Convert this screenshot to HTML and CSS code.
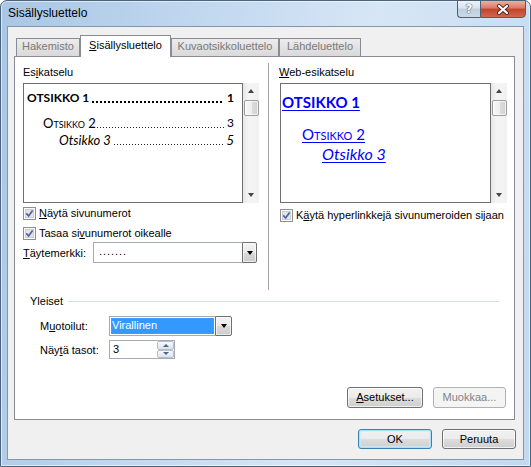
FILE: index.html
```html
<!DOCTYPE html>
<html lang="fi">
<head>
<meta charset="utf-8">
<title>Sisällysluettelo</title>
<link rel="stylesheet" href="styles.css">
</head>
<body>
<div class="window">
  <div class="titlebar">
    <div class="title">Sisällysluettelo</div>
    <div class="caption-btns">
      <div class="cap-btn help"><span>?</span></div>
      <div class="cap-btn close">
        <svg width="14" height="11" viewBox="0 0 14 11"><path d="M3 2 L11 9 M11 2 L3 9" stroke="#4b2a22" stroke-width="4" stroke-linecap="round"/><path d="M3 2 L11 9 M11 2 L3 9" stroke="#ffffff" stroke-width="2.2" stroke-linecap="round"/></svg>
      </div>
    </div>
  </div>
  <div class="client">
    <div class="tabs">
      <div class="tab tw1">Hakemisto</div>
      <div class="tab active tw2"><u>S</u>isällysluettelo</div>
      <div class="tab tw3">Kuvaotsikkoluettelo</div>
      <div class="tab tw4">Lähdeluettelo</div>
    </div>
    <div class="panel">
      <div class="columns">
        <div class="col col-left">
          <div class="label">Es<u>i</u>katselu</div>
          <div class="preview-wrap">
            <div class="preview print">
              <div class="toc l1"><span class="t">OTSIKKO 1</span><span class="dots"></span><span class="num">1</span></div>
              <div class="toc l2"><span class="t">Otsikko 2</span><span class="dots"></span><span class="num">3</span></div>
              <div class="toc l3"><span class="t">Otsikko 3</span><span class="dots"></span><span class="num">5</span></div>
            </div>
            <div class="vscroll"><span class="arr up"></span><span class="thumb"></span><span class="arr down"></span></div>
          </div>
          <div class="check c1">
            <svg class="cb" width="13" height="13" viewBox="0 0 13 13"><rect x="0.5" y="0.5" width="12" height="12" fill="#fbfbfb" stroke="#8f8f8f"/><rect x="2.5" y="2.5" width="8" height="8" fill="#e4e4e4" stroke="#cdcdcd"/><path d="M3.3 6.4 L5.6 9 L9.6 3.4" fill="none" stroke="#4d62a0" stroke-width="1.7"/></svg>
            <span><u>N</u>äytä sivunumerot</span>
          </div>
          <div class="check c2">
            <svg class="cb" width="13" height="13" viewBox="0 0 13 13"><rect x="0.5" y="0.5" width="12" height="12" fill="#fbfbfb" stroke="#8f8f8f"/><rect x="2.5" y="2.5" width="8" height="8" fill="#e4e4e4" stroke="#cdcdcd"/><path d="M3.3 6.4 L5.6 9 L9.6 3.4" fill="none" stroke="#4d62a0" stroke-width="1.7"/></svg>
            <span>Tasaa si<u>v</u>unumerot oikealle</span>
          </div>
          <div class="fill-row">
            <span class="fill-label"><u>T</u>äytemerkki:</span>
            <div class="combo fill-combo"><div class="field dotted">.......</div><div class="dd"></div></div>
          </div>
        </div>
        <div class="vsep"></div>
        <div class="col col-right">
          <div class="label web-label"><u>W</u>eb-esikatselu</div>
          <div class="preview-wrap">
            <div class="preview web">
              <div class="web-row wr1"><span>OTSIKKO 1</span></div>
              <div class="web-row wr2"><span>Otsikko 2</span></div>
              <div class="web-row wr3"><span>Otsikko 3</span></div>
            </div>
            <div class="vscroll"><span class="arr up"></span><span class="thumb"></span><span class="arr down"></span></div>
          </div>
          <div class="check c3">
            <svg class="cb" width="13" height="13" viewBox="0 0 13 13"><rect x="0.5" y="0.5" width="12" height="12" fill="#fbfbfb" stroke="#8f8f8f"/><rect x="2.5" y="2.5" width="8" height="8" fill="#e4e4e4" stroke="#cdcdcd"/><path d="M3.3 6.4 L5.6 9 L9.6 3.4" fill="none" stroke="#4d62a0" stroke-width="1.7"/></svg>
            <span>K<u>ä</u>ytä hyperlinkkejä sivunumeroiden sijaan</span>
          </div>
        </div>
      </div>
      <div class="group">
        <div class="group-head"><span>Yleiset</span><div class="line"></div></div>
        <div class="frow fr1">
          <span class="flabel">M<u>u</u>otoilut:</span>
          <div class="combo style-combo"><div class="field"><div class="sel">Virallinen</div></div><div class="dd"></div></div>
        </div>
        <div class="frow fr2">
          <span class="flabel">Näy<u>t</u>ä tasot:</span>
          <div class="spin">
            <div class="val">3</div>
            <div class="sbtns"><div class="sb sup"></div><div class="sb sdown"></div></div>
          </div>
        </div>
      </div>
      <div class="actions">
        <div class="btn b-aset"><u>A</u>setukset...</div>
        <div class="btn disabled b-muok">Muokkaa...</div>
      </div>
    </div>
    <div class="footer">
      <div class="btn default b-ok">OK</div>
      <div class="btn b-cancel">Peruuta</div>
    </div>
  </div>
</div>
</body>
</html>
```
FILE: styles.css
```css
* { box-sizing: border-box; }
html, body { margin: 0; padding: 0; }
body {
  width: 531px;
  height: 467px;
  overflow: hidden;
  background: #ffffff;
  font-family: "Liberation Sans", Arial, sans-serif;
  font-size: 11px;
  color: #000000;
}
u { text-decoration: underline; text-underline-offset: 1px; }

.window {
  width: 531px;
  height: 467px;
  border: 1px solid #4a6580;
  border-radius: 7px 7px 0 0;
  padding: 0 6px 6px 6px;
  display: flex;
  flex-direction: column;
  background: linear-gradient(100deg, #a9c6e4 0%, #bfd6ee 30%, #d6e6f6 62%, #cde0f3 80%, #c3d9f0 100%);
  box-shadow: inset 0 0 0 1px rgba(255, 255, 255, 0.55);
}

.titlebar {
  height: 25px;
  margin: 0 -6px;
  padding-left: 7px;
  display: flex;
  justify-content: space-between;
  align-items: flex-start;
}
.title { font-size: 12px; line-height: 15px; padding-top: 5px; }
.caption-btns { display: flex; margin-right: 4px; margin-top: -1px; }
.cap-btn {
  height: 18px;
  border: 1px solid #4c5f73;
  display: flex;
  align-items: center;
  justify-content: center;
}
.help {
  width: 23px;
  border-right: none;
  border-radius: 0 0 0 4px;
  background: linear-gradient(180deg, #eef3f9 0%, #d9e3ee 45%, #bfcedf 50%, #ccd9e7 100%);
}
.help span {
  font-family: "DejaVu Sans", sans-serif;
  font-weight: bold;
  font-size: 12px;
  line-height: 12px;
  color: #ffffff;
  text-shadow: 0 0 1px #4a5b6e, 0 0 1px #4a5b6e, 0 0 1px #4a5b6e;
}
.close {
  width: 46px;
  border-radius: 0 0 4px 0;
  background: linear-gradient(180deg, #eab0a3 0%, #d87964 45%, #c2432b 50%, #d0664d 100%);
}
.close svg { display: block; }

.client {
  flex: 1;
  background: #f0f0f0;
  border: 1px solid #8496aa;
  padding: 8px 8px 0 6px;
  display: flex;
  flex-direction: column;
}

.tabs {
  display: flex;
  align-items: flex-end;
  height: 21px;
  margin-left: 2px;
  position: relative;
  z-index: 1;
}
.tab {
  height: 18px;
  border: 1px solid #898c95;
  border-bottom: none;
  background: linear-gradient(180deg, #ececec 0%, #e2e2e2 50%, #d9d9d9 100%);
  color: #7a7a7a;
  text-align: center;
  line-height: 13px;
  padding-top: 1px;
  white-space: nowrap;
}
.tab.active {
  height: 22px;
  margin-bottom: -1px;
  background: #ffffff;
  color: #000000;
  padding-top: 3px;
}
.tw1 { width: 64px; }
.tw2 { width: 91px; }
.tw3 { width: 108px; }
.tw4 { width: 82px; }

.panel {
  height: 364px;
  background: #ffffff;
  border: 1px solid #898c95;
  padding: 6px 7px 0 8px;
  display: flex;
  flex-direction: column;
}
.columns { display: flex; height: 227px; }
.col-left { width: 236px; }
.col-right { width: 227px; }
.vsep { width: 1px; background: #a3a3a3; margin: 0 11px 0 9px; }
.label { margin-top: 3px; line-height: 13px; }
.web-label { margin-left: -1px; }

.preview-wrap { display: flex; margin-top: 4px; height: 120px; }
.preview { border: 1px solid #6f6f6f; background: #ffffff; overflow: hidden; }

.print {
  width: 220px;
  padding: 6px 8px 0 3px;
  font-family: Lato, "Liberation Sans", sans-serif;
  font-size: 12px;
}
.toc { display: flex; line-height: 16px; white-space: nowrap; }
.toc .dots {
  flex: 1;
  margin-left: 3px;
  background-image: linear-gradient(90deg, #222222 1px, transparent 1px);
  background-size: 3px 1px;
  background-repeat: repeat-x;
  background-position: 0 12px;
}
.toc .num { padding-left: 3px; }
.l1 { font-weight: bold; }
.l1 .dots {
  background-image: linear-gradient(90deg, #000000 2px, transparent 2px);
  background-size: 4px 2px;
  background-position: 0 11px;
}
.l2 { margin-top: 9px; padding-left: 16px; font-size: 13px; }
.l2 .t { font-variant: small-caps; }
.l2 .dots { margin-left: 1px; }
.l2 .num { font-size: 12px; }
.l3 { margin-top: 1px; padding-left: 32px; font-style: italic; font-size: 13px; }

.web {
  width: 211px;
  padding: 8px 0 0 1px;
  font-family: Lato, "Liberation Sans", sans-serif;
  color: #0000ff;
}
.web-row { line-height: 20px; white-space: nowrap; }
.web-row span { text-decoration: underline; text-underline-offset: 2px; }
.wr1 { font-size: 15px; font-weight: bold; }
.wr2 { font-size: 15px; font-variant: small-caps; margin-top: 12px; padding-left: 20px; }
.wr3 { font-size: 16px; font-style: italic; padding-left: 40px; }

.vscroll {
  width: 16px;
  display: flex;
  flex-direction: column;
  align-items: center;
  background: linear-gradient(90deg, #e7e7e7 0%, #f4f4f4 35%, #f2f2f2 100%);
}
.arr { height: 16px; width: 16px; display: flex; align-items: center; justify-content: center; }
.arr::before {
  content: "";
  border-left: 3.5px solid transparent;
  border-right: 3.5px solid transparent;
}
.arr.up::before { border-bottom: 4px solid #444444; }
.arr.down::before { border-top: 4px solid #444444; }
.arr.down { margin-top: auto; }
.thumb {
  width: 15px;
  height: 16px;
  margin-top: 1px;
  border: 1px solid #9b9b9b;
  border-radius: 2px;
  background: linear-gradient(90deg, #f8f8f8 0%, #ededed 50%, #dddddd 51%, #d2d2d2 100%);
  box-shadow: inset 0 0 0 1px rgba(255, 255, 255, 0.7);
}

.check { display: flex; align-items: center; gap: 3px; height: 13px; line-height: 13px; white-space: nowrap; }
.cb { flex: none; display: block; }
.c1 { margin-top: 4px; }
.c2 { margin-top: 7px; }
.c3 { margin-top: 6px; }

.fill-row { display: flex; align-items: center; margin-top: 2px; }
.fill-label { width: 70px; }
.combo { display: flex; height: 21px; }
.combo .field {
  flex: 1;
  border: 1px solid #a6abb3;
  border-right: none;
  background: #ffffff;
}
.combo .dd {
  width: 15px;
  border: 1px solid #707070;
  border-radius: 0 2px 2px 0;
  background: linear-gradient(180deg, #f4f4f4 0%, #e9e9e9 50%, #d9d9d9 51%, #cdcdcd 100%);
  box-shadow: inset 0 0 0 1px rgba(255, 255, 255, 0.6);
  display: flex;
  align-items: center;
  justify-content: center;
}
.combo .dd::before {
  content: "";
  border-left: 3.5px solid transparent;
  border-right: 3.5px solid transparent;
  border-top: 4px solid #000000;
}
.fill-combo { width: 164px; }
.field.dotted { padding-left: 5px; line-height: 17px; letter-spacing: 0.94px; color: #000000; }

.group { margin-top: 5px; }
.group-head { display: flex; align-items: center; padding-left: 7px; line-height: 13px; }
.group-head .line { flex: 1; height: 1px; background: #d5dfe5; margin: 0 8px 0 5px; }
.frow { display: flex; align-items: center; padding-left: 17px; }
.flabel { width: 69px; }
.fr1 { margin-top: 8px; }
.fr2 { margin-top: 4px; }
.style-combo { width: 123px; height: 20px; }
.style-combo .field { padding: 1px; }
.style-combo .dd { width: 17px; }
.sel {
  height: 100%;
  background: #3399ff;
  color: #ffffff;
  outline: 1px dotted #c8823c;
  outline-offset: -1px;
  padding-left: 1px;
  line-height: 15px;
}

.spin {
  width: 66px;
  height: 19px;
  border: 1px solid #a6abb3;
  background: #ffffff;
  display: flex;
}
.spin .val { flex: 1; padding-left: 3px; line-height: 17px; }
.sbtns { width: 17px; display: flex; flex-direction: column; }
.sb {
  flex: 1;
  border: 1px solid #b5bfcc;
  border-radius: 2px;
  background: linear-gradient(180deg, #f7f9fc 0%, #e9eef4 50%, #dbe2eb 100%);
  display: flex;
  align-items: center;
  justify-content: center;
}
.sb::before {
  content: "";
  border-left: 3px solid transparent;
  border-right: 3px solid transparent;
}
.sup::before { border-bottom: 3px solid #4f6488; }
.sdown::before { border-top: 3px solid #4f6488; }

.actions { display: flex; justify-content: flex-end; gap: 10px; margin-top: 28px; padding-right: 1px; }
.footer { display: flex; justify-content: flex-end; gap: 10px; margin-top: 9px; margin-right: -1px; }

.btn {
  height: 21px;
  border: 1px solid #707070;
  border-radius: 3px;
  background: linear-gradient(180deg, #f2f2f2 0%, #ebebeb 50%, #dddddd 51%, #cfcfcf 100%);
  box-shadow: inset 0 0 0 1px rgba(255, 255, 255, 0.7);
  text-align: center;
  line-height: 19px;
  white-space: nowrap;
}
.footer .btn { height: 20px; line-height: 18px; }
.btn.default {
  border-color: #3c7fb1;
  box-shadow: inset 0 0 0 1px #a9e2fb, inset 0 0 0 2px rgba(200, 238, 252, 0.6);
}
.btn.disabled {
  border-color: #adb2b5;
  background: #f4f4f4;
  color: #838383;
  box-shadow: none;
}
.b-aset { width: 76px; }
.b-muok { width: 73px; }
.b-ok { width: 74px; }
.b-cancel { width: 74px; }
```
